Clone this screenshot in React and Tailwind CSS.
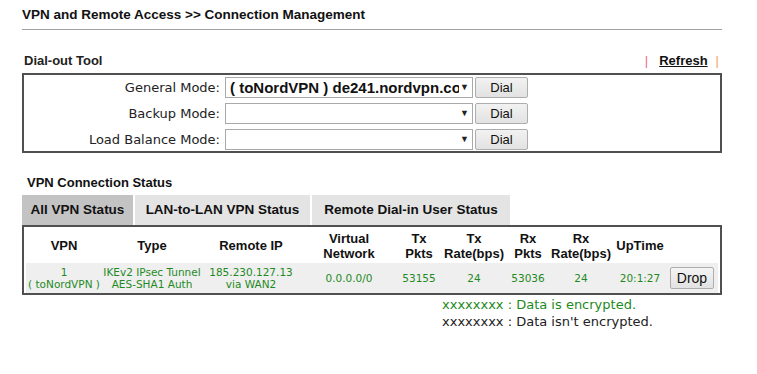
export default function App() {
  const arial = { fontFamily: '"Liberation Sans", Arial, sans-serif' };
  const cols = [
    { w: 'w-[76px]', head: ['VPN'], data: ['1', '( toNordVPN )'] },
    { w: 'w-[100px]', head: ['Type'], data: ['IKEv2 IPsec Tunnel', 'AES-SHA1 Auth'] },
    { w: 'w-[98px]', head: ['Remote IP'], data: ['185.230.127.13', 'via WAN2'] },
    { w: 'w-[98px]', head: ['Virtual', 'Network'], data: ['0.0.0.0/0'] },
    { w: 'w-[42px]', head: ['Tx', 'Pkts'], data: ['53155'] },
    { w: 'w-[68px]', head: ['Tx', 'Rate(bps)'], data: ['24'] },
    { w: 'w-[40px]', head: ['Rx', 'Pkts'], data: ['53036'] },
    { w: 'w-[66px]', head: ['Rx', 'Rate(bps)'], data: ['24'] },
    { w: 'w-[52px]', head: ['UpTime'], data: ['20:1:27'] },
  ];
  const modes = [
    { label: 'General Mode:', value: '( toNordVPN ) de241.nordvpn.com' },
    { label: 'Backup Mode:', value: '' },
    { label: 'Load Balance Mode:', value: '' },
  ];

  return (
    <div className="w-[757px] h-[374px] bg-white text-[#222]" style={arial}>
      <div className="ml-[22px] w-[700px]">
        <div className="pt-[7px] h-[30px] border-b border-[#a0a0a0] text-[13.5px] font-bold leading-[16px] text-[#111]">
          VPN and Remote Access &gt;&gt; Connection Management
        </div>

        <div className="mt-[23px] h-[20px] flex items-start justify-between text-[13px] font-bold leading-[16px]">
          <span className="ml-[2px]">Dial-out Tool</span>
          <span className="flex items-center mr-[3px]">
            <span className="text-[#f06a8a] font-normal">|</span>
            <span className="ml-[11px] underline text-[#111]">Refresh</span>
            <span className="ml-[8px] text-[#f5a060] font-normal">|</span>
          </span>
        </div>

        <div className="h-[80px] border-2 border-[#505050] pt-[2px] flex flex-col gap-[5px]">
          {modes.map((m) => (
            <div key={m.label} className="flex items-center h-[21px]">
              <div
                className="w-[196px] text-right text-[13px] text-[#222]"
                style={{ fontFamily: '"DejaVu Sans", Verdana, sans-serif' }}
              >
                {m.label}
              </div>
              <div className="ml-[5px] w-[248px] h-[21px] border border-[#a9a9a9] bg-white flex items-center pl-[4px] pr-[3px]">
                <span className="flex-1 overflow-hidden whitespace-nowrap text-[15px] leading-[17px] font-bold text-[#111]">
                  {m.value}
                </span>
                <span className="text-[9px] text-[#222] ml-[1px]">▼</span>
              </div>
              <button className="ml-[2px] w-[53px] h-[21px] border border-[#adadad] rounded-[2px] bg-gradient-to-b from-[#f2f2f2] to-[#e2e2e2] text-[13px] text-[#111]">
                Dial
              </button>
            </div>
          ))}
        </div>

        <div className="mt-[22px] ml-[5px] h-[18px] text-[13px] font-bold leading-[16px] text-[#111]">
          VPN Connection Status
        </div>

        <div className="mt-[2px] flex gap-[2px] h-[30px] text-[13.5px] font-bold text-[#111]">
          <div className="w-[111px] bg-[#c3c3c3] flex items-center justify-center">All VPN Status</div>
          <div className="w-[175px] bg-[#e4e4e4] flex items-center justify-center">LAN-to-LAN VPN Status</div>
          <div className="w-[198px] bg-[#e4e4e4] flex items-center justify-center">Remote Dial-in User Status</div>
        </div>

        <div className="h-[70px] border-2 border-[#505050] pl-[2px] pt-[1px]">
          <div className="flex h-[35px] text-[13px] font-bold leading-[15px] text-[#111]">
            {cols.map((c, i) => (
              <div key={i} className={`${c.w} flex flex-col items-center justify-center`}>
                {c.head.map((h) => (
                  <span key={h}>{h}</span>
                ))}
              </div>
            ))}
          </div>
          <div
            className="flex h-[30px] w-[692px] bg-[#efefef] text-[10.5px] leading-[12px] text-[#1e8a1e]"
            style={{ fontFamily: '"DejaVu Sans", Verdana, sans-serif' }}
          >
            {cols.map((c, i) => (
              <div key={i} className={`${c.w} flex flex-col items-center justify-center whitespace-nowrap`}>
                {c.data.map((d) => (
                  <span key={d}>{d}</span>
                ))}
              </div>
            ))}
            <div className="flex-1 flex items-center justify-center">
              <button
                className="w-[44px] h-[22px] border border-[#adadad] rounded-[2px] bg-gradient-to-b from-[#f4f4f4] to-[#e2e2e2] text-[14px] text-[#111]"
                style={arial}
              >
                Drop
              </button>
            </div>
          </div>
        </div>

        <div
          className="ml-[420px] mt-[1px] text-[13px] leading-[17px]"
          style={{ fontFamily: '"DejaVu Sans", Verdana, sans-serif' }}
        >
          <div className="text-[#1e8a1e]">xxxxxxxx : Data is encrypted.</div>
          <div className="text-[#222]">xxxxxxxx : Data isn't encrypted.</div>
        </div>
      </div>
    </div>
  );
}
